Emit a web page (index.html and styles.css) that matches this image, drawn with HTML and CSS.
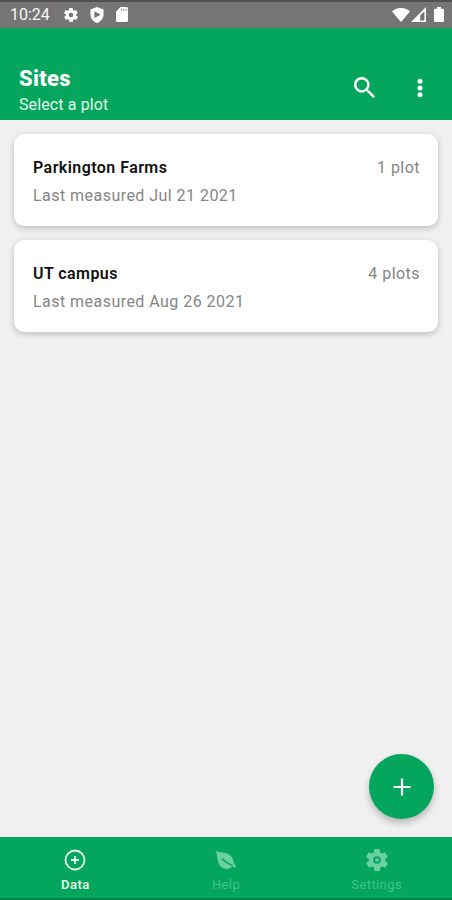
FILE: index.html
```html
<!DOCTYPE html>
<html lang="en">
<head>
<meta charset="utf-8">
<title>Sites</title>
<link rel="stylesheet" href="styles.css">
</head>
<body>
<div class="screen">
  <div class="status">
    <span class="time">10:24</span>
    <svg class="s-gear" viewBox="2 2 20 20"><path fill-rule="evenodd" d="M19.4 13c0-.3.1-.6.1-1s0-.7-.1-1l2.1-1.600c.2-.2.2-.4.1-.6l-2-3.500c-.1-.2-.4-.3-.6-.2l-2.500 1c-.5-.4-1.100-.7-1.700-1l-.4-2.600c0-.3-.2-.5-.5-.5h-4c-.3 0-.5.2-.5.500l-.4 2.600c-.6.300-1.200.6-1.700 1l-2.500-1c-.2-.1-.5 0-.6.200l-2 3.500c-.1.200-.1.400.1.600L4.600 11c-.1.300-.1.700-.1 1s0 .7.100 1l-2.100 1.600c-.2.200-.2.400-.1.600l2 3.500c.1.200.4.300.6.200l2.500-1c.5.400 1.100.7 1.700 1l.4 2.600c0 .3.200.5.500.5h4c.3 0 .5-.2.500-.5l.4-2.600c.6-.3 1.200-.6 1.700-1l2.500 1c.2.100.5 0 .6-.2l2-3.500c.1-.2.100-.4-.1-.6zM12 15.300a3.300 3.300 0 1 1 0-6.600 3.300 3.300 0 0 1 0 6.600z"/></svg>
    <svg class="s-shield" viewBox="3 1 18 22"><path fill-rule="evenodd" d="M12 1 3 4.500V11c0 5.500 3.800 10.700 9 12 5.200-1.300 9-6.500 9-12V4.500zM8.500 6.800l8.500 4.700-8.500 4.700z"/></svg>
    <svg class="s-card" viewBox="4 2 16 20"><path fill-rule="evenodd" d="M18 2h-8L4 8v12c0 1.100.9 2 2 2h12c1.100 0 2-.9 2-2V4c0-1.100-.9-2-2-2zm-6 5h-1.200V4.500H12zm3 0h-1.200V4.500H15zm3 0h-1.200V4.500H18z"/></svg>
    <span class="grow"></span>
    <svg class="s-wifi" viewBox="0 0 18 14"><path d="M9 14 0 3.500C5-1.200 13-1.200 18 3.500z"/></svg>
    <svg class="s-signal" viewBox="0 0 15 15"><path fill-rule="evenodd" d="M15 0v15H0zM13.400 4.200 9.200 8.300v5.200h4.200z"/></svg>
    <svg class="s-battery" viewBox="0 0 10 15"><path d="M3 0h4v1.700h2q1 0 1 1V14q0 1-1 1H1q-1 0-1-1V2.700q0-1 1-1h2z"/></svg>
  </div>
  <header class="appbar">
    <div class="heading">
      <h1>Sites</h1>
      <p>Select a plot</p>
    </div>
    <svg class="search" viewBox="3 3 17.500 17.500"><path fill-rule="evenodd" d="M15.500 14h-.8l-.3-.3A6.500 6.500 0 1 0 13.700 14.400l.3.300v.8l5 5 1.500-1.500zm-6 0a4.500 4.500 0 1 1 0-9 4.500 4.500 0 0 1 0 9z"/></svg>
    <svg class="more" viewBox="0 0 6 20"><circle cx="3" cy="3.200" r="2.500"/><circle cx="3" cy="10" r="2.500"/><circle cx="3" cy="16.800" r="2.500"/></svg>
  </header>
  <main>
    <section class="card">
      <div class="row"><h2>Parkington Farms</h2><span>1 plot</span></div>
      <p>Last measured Jul 21 2021</p>
    </section>
    <section class="card">
      <div class="row"><h2>UT campus</h2><span>4 plots</span></div>
      <p>Last measured Aug 26 2021</p>
    </section>
    <button class="fab" aria-label="Add"><svg viewBox="0 0 18 18"><path d="M9 .5v17M.5 9h17"/></svg></button>
  </main>
  <nav>
    <a class="active"><svg viewBox="0 0 22 22"><circle cx="11" cy="11" r="9.500"/><path d="M11 7v8M7 11h8"/></svg><span>Data</span></a>
    <a><svg class="solid" viewBox="0 0 22 22"><path d="M.3 1C2.500 3.400 6 3.300 9.500 3.800c5.800.8 9 5 9.200 10.500l2.800 3.600-1.600.7-2.700-1.400C14.500 20.600 9.500 20.800 6 17.800 1.600 14 3.200 7 .3 1z"/><path class="vein" d="M7.500 10c2.200 3 5.700 4.400 9.500 6.200"/></svg><span>Help</span></a>
    <a><svg class="solid" viewBox="2 2 20 20"><path fill-rule="evenodd" d="M19.400 13c0-.3.1-.6.1-1s0-.7-.1-1l2.100-1.600c.2-.2.2-.4.1-.6l-2-3.500c-.1-.2-.4-.3-.6-.2l-2.500 1c-.5-.4-1.100-.7-1.700-1l-.4-2.600c0-.3-.2-.5-.5-.5h-4c-.3 0-.5.2-.5.500l-.4 2.600c-.6.300-1.200.6-1.700 1l-2.500-1c-.2-.1-.5 0-.6.200l-2 3.500c-.1.200-.1.400.1.600L4.600 11c-.1.300-.1.700-.1 1s0 .7.100 1l-2.100 1.600c-.2.200-.2.400-.1.600l2 3.500c.1.200.4.300.6.200l2.500-1c.5.400 1.100.7 1.700 1l.4 2.600c0 .3.200.5.500.5h4c.3 0 .5-.2.500-.5l.4-2.600c.6-.3 1.200-.6 1.700-1l2.500 1c.2.100.5 0 .6-.2l2-3.500c.1-.2.100-.4-.1-.6zM12 15.500a3.500 3.500 0 1 1 0-7 3.500 3.500 0 0 1 0 7z"/><circle cx="12" cy="12" r="1.700"/></svg><span>Settings</span></a>
  </nav>
</div>
</body>
</html>
```
FILE: styles.css
```css
* { box-sizing: border-box; }
body { margin: 0; font-family: Roboto, sans-serif; }
h1, h2, p { margin: 0; }
svg { display: block; flex: none; fill: #fff; }
.screen { width: 452px; height: 900px; display: flex; flex-direction: column; background: #f0f0f0; overflow: hidden; }
.status { height: 28px; flex: none; background: #757575; border-top: 2px solid #505050; display: flex; align-items: center; padding: 0 8px 1px 10px; }
.time { width: 54px; font-size: 16px; line-height: 20px; color: #f5f5f5; }
.grow { flex: 1; }
.s-gear { width: 14px; height: 14px; }
.s-shield { width: 14px; height: 16px; margin-left: 12px; }
.s-card { width: 12px; height: 15px; margin-left: 12px; }
.s-wifi { width: 18px; height: 14px; }
.s-signal { width: 15px; height: 15px; margin-left: 1px; }
.s-battery { width: 10px; height: 15px; margin-left: 8px; }
.appbar { height: 92px; flex: none; background: #04a65d; color: #fff; display: flex; padding: 37px 29px 0 19px; }
.heading { flex: 1; }
h1 { font-size: 22px; line-height: 28px; font-weight: 800; letter-spacing: .3px; }
.heading p { font-size: 16px; line-height: 24px; color: #e0f5ea; letter-spacing: .12px; }
.search { width: 21px; height: 21px; margin-top: 12px; }
.more { width: 6px; height: 20px; margin: 13px 0 0 42px; }
main { flex: 1; position: relative; padding: 14px; display: flex; flex-direction: column; gap: 14px; }
.card { height: 92px; background: #fff; border-radius: 10px; padding: 20px 18px 0 19px; box-shadow: 0 2px 6px rgba(0,0,0,.22); }
.row { display: flex; justify-content: space-between; line-height: 28px; }
h2 { font-size: 16px; font-weight: 600; color: #111; letter-spacing: .44px; }
.card span, .card p { font-size: 16px; color: #858585; line-height: 28px; letter-spacing: .46px; }
.fab { position: absolute; right: 18px; bottom: 18px; width: 65px; height: 65px; border: 0; border-radius: 50%; padding: 0; background: #04a65d; display: grid; place-items: center; box-shadow: 0 4px 7px rgba(0,0,0,.24); }
.fab svg { width: 18px; height: 18px; stroke: #fff; stroke-width: 2.2; }
nav { height: 63px; flex: none; background: #04a65d; border-bottom: 2px solid #078149; display: flex; }
nav a { flex: 1; display: flex; flex-direction: column; align-items: center; padding-top: 12px; color: #43c28a; font-size: 13px; line-height: 16px; letter-spacing: .4px; }
nav a span { margin-top: 6px; }
nav svg { width: 22px; height: 22px; fill: none; stroke: #e6f8ef; stroke-width: 1.8; }
nav .solid { fill: #6bd0a4; stroke: none; }
nav .vein { fill: none; stroke: #04a65d; stroke-width: 1.5; stroke-linecap: round; }
nav .active { color: #f2fcf7; font-weight: 500; }
```
